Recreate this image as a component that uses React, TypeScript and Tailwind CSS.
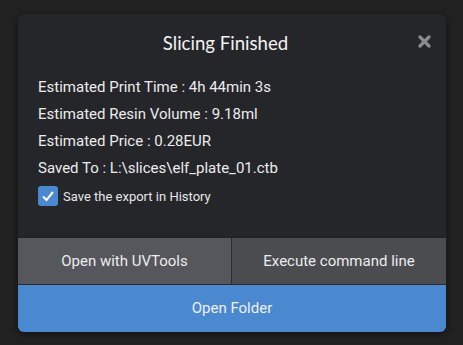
import { useState } from 'react';

export default function App() {
  const [keepHistory, setKeepHistory] = useState(true);

  const details = [
    { label: 'Estimated Print Time', value: '4h 44min 3s' },
    { label: 'Estimated Resin Volume', value: '9.18ml' },
    { label: 'Estimated Price', value: '0.28EUR' },
    { label: 'Saved To', value: 'L:\\slices\\elf_plate_01.ctb' },
  ];

  return (
    <div className="w-[463px] h-[345px] bg-[#222222] pt-[14px] px-[18px] font-['Roboto',sans-serif]">
      <div className="w-[428px] h-[318px] bg-[#25262a] rounded-[6px] flex flex-col overflow-hidden shadow-[0_2px_8px_rgba(0,0,0,0.5)]">
        {/* Header */}
        <div className="relative h-[60px] flex items-center justify-center pr-[13px]">
          <h1 className="text-[18.6px] text-[#f2f2f2] font-['Lato',sans-serif]">Slicing Finished</h1>
          <button className="absolute right-[15px] top-[21px] text-[#8a8b8e]">
            <svg width="13" height="13" viewBox="0 0 13 13">
              <path d="M2 2 L11 11 M11 2 L2 11" stroke="currentColor" strokeWidth="3.2" strokeLinecap="round" />
            </svg>
          </button>
        </div>

        {/* Details */}
        <div className="flex-1 px-[20px] pt-[4px] text-[#ececec]">
          <div className="flex flex-col gap-[9px] text-[15px] leading-[18px]">
            {details.map(d => (
              <p key={d.label}>{d.label} : {d.value}</p>
            ))}
          </div>
          <label className="flex items-center gap-[5px] mt-[8px] cursor-pointer">
            <span
              onClick={() => setKeepHistory(!keepHistory)}
              className="w-[20px] h-[20px] rounded-[3px] bg-[#4a88d0] flex items-center justify-center"
            >
              {keepHistory && (
                <svg width="14" height="14" viewBox="0 0 14 14">
                  <path d="M2 7.5 L5.5 11 L12 3" fill="none" stroke="white" strokeWidth="2" />
                </svg>
              )}
            </span>
            <span className="text-[13px] text-[#e6e6e6] pt-[2px]">Save the export in History</span>
          </label>
        </div>

        {/* Actions */}
        <div className="grid grid-cols-2 h-[47px] border-t border-[#1e1f22]">
          <button className="bg-[#56575c] text-[#ececec] text-[15px] border-r border-[#2a2b2e]">Open with UVTools</button>
          <button className="bg-[#4b4c50] text-[#ececec] text-[15px]">Execute command line</button>
        </div>
        <button className="h-[48px] bg-[#4a88d0] text-[#f0f0f0] text-[15px] border-t border-[#2a2b2e]">Open Folder</button>
      </div>
    </div>
  );
}
